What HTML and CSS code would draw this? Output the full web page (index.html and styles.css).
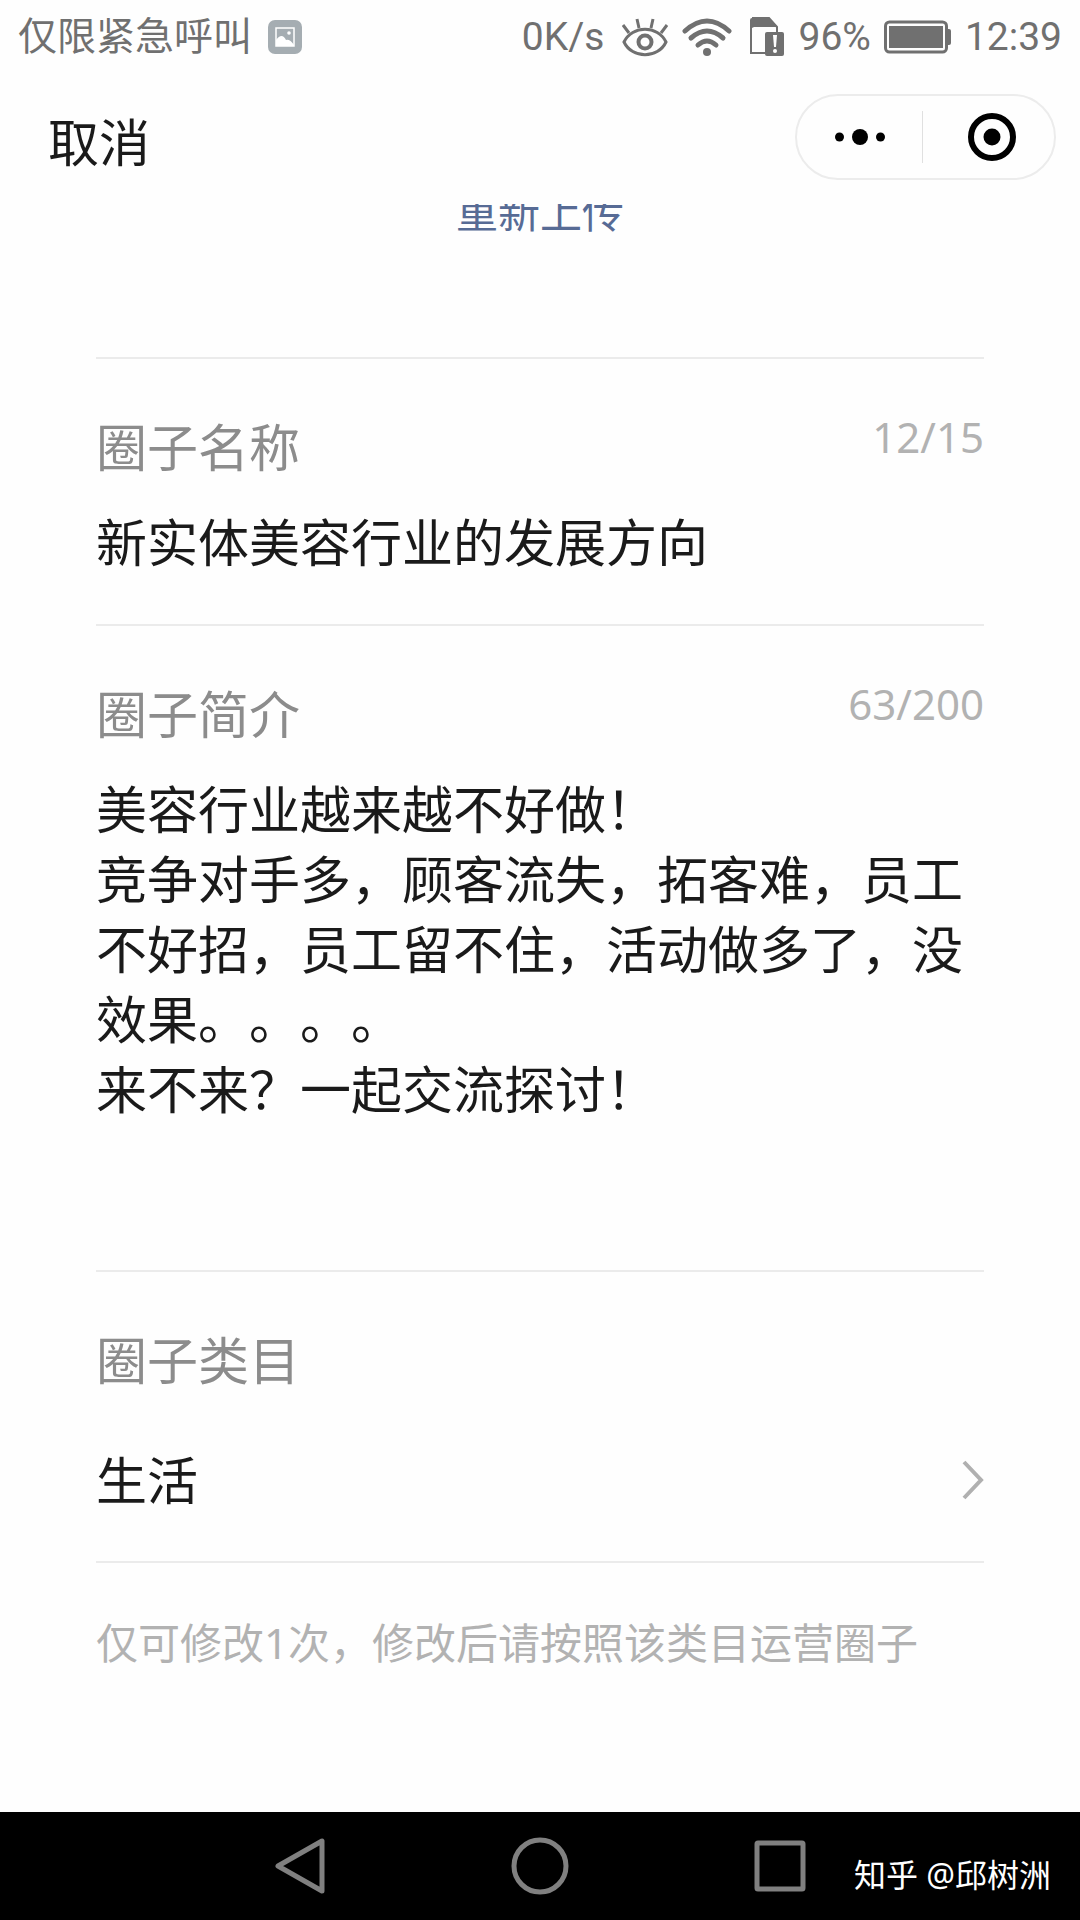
FILE: index.html
```html
<!DOCTYPE html>
<html lang="zh-CN">
<head>
  <meta charset="UTF-8" />
  <meta name="viewport" content="width=device-width, initial-scale=1" />
  <title>圈子资料</title>
  <link rel="stylesheet" href="styles.css">
</head>
<body>
  <div class="status-bar">
    <div class="status-left">
      <span>仅限紧急呼叫</span>
      <svg width="34" height="34" viewBox="0 0 34 34">
        <rect width="34" height="34" rx="7" fill="#a5adb2" />
        <rect x="8" y="8" width="18" height="18" fill="none" stroke="#fff" stroke-width="1.5" />
        <path d="M8 20 Q14 12 18 20 Q22 19 26 25 V26 H8Z" fill="#fff" />
        <circle cx="21" cy="13" r="1.8" fill="#fff" />
      </svg>
    </div>
    <div class="status-right">
      <span>0K/s</span>
      <svg class="icon-eye" width="48" height="40" viewBox="0 0 48 40" fill="none" stroke="#707070" stroke-width="3">
        <path d="M3 25 C11 8 37 8 45 25 C37 42 11 42 3 25Z" />
        <circle cx="24" cy="25" r="6.5" stroke-width="4" />
        <path d="M8 16 L2 8 M18 11 L16 2 M30 11 L32 2 M40 16 L46 8" />
      </svg>
      <svg class="icon-wifi" width="50" height="40" viewBox="0 0 50 40" fill="none" stroke="#707070" stroke-width="5" stroke-linecap="round">
        <path d="M3 14 Q25 -6 47 14" />
        <path d="M9 21 Q25 7 41 21" />
        <path d="M16 28 Q25 20 34 28" />
        <circle cx="25" cy="35" r="4" fill="#707070" stroke="none" />
      </svg>
      <svg width="36" height="40" viewBox="0 0 36 40">
        <path d="M3 1 H20 L28 10 V18 M16 36 H2 V3" fill="none" stroke="#707070" stroke-width="2" />
        <path d="M1 3 Q1 1 3 1 H20 L28 10 H5 L1 12Z" fill="#707070" />
        <rect x="16" y="15" width="19" height="24" rx="2" fill="#707070" />
        <path d="M24 18 H28 L27 30 H25Z" fill="#fff" />
        <circle cx="26" cy="34" r="2" fill="#fff" />
      </svg>
      <span>96%</span>
      <svg width="68" height="34" viewBox="0 0 68 34">
        <rect x="1.5" y="2" width="61" height="30" rx="4" fill="none" stroke="#707070" stroke-width="3" />
        <rect x="5" y="6" width="54" height="22" fill="#707070" />
        <path d="M63 9 H65 Q67 9 67 11 V23 Q67 25 65 25 H63Z" fill="#707070" />
      </svg>
      <span>12:39</span>
    </div>
  </div>

  <header class="navbar">
    <button type="button" class="btn-cancel">取消</button>
    <div class="capsule">
      <button type="button" aria-label="更多">
        <svg width="52" height="52" viewBox="0 0 52 52">
          <circle cx="5.5" cy="26" r="4.5" />
          <circle cx="26" cy="26" r="8" />
          <circle cx="46.5" cy="26" r="4.5" />
        </svg>
      </button>
      <button type="button" class="btn-close" aria-label="关闭">
        <svg width="52" height="52" viewBox="0 0 52 52">
          <circle cx="26" cy="26" r="21" fill="none" stroke="#000" stroke-width="6" />
          <circle cx="26" cy="26" r="8.5" />
        </svg>
      </button>
    </div>
  </header>

  <main class="content">
    <a href="#" class="reupload">重新上传</a>

    <form class="form">
      <div class="field">
        <div class="field-head">
          <label for="name">圈子名称</label>
          <span class="count">12/15</span>
        </div>
        <input type="text" id="name" maxlength="15" value="新实体美容行业的发展方向">
      </div>

      <div class="field field-intro">
        <div class="field-head">
          <label for="intro">圈子简介</label>
          <span class="count">63/200</span>
        </div>
        <textarea id="intro" rows="6" maxlength="200">美容行业越来越不好做！
竞争对手多，顾客流失，拓客难，员工不好招，员工留不住，活动做多了，没效果。。。。
来不来？一起交流探讨！</textarea>
      </div>

      <div class="field field-category">
        <div class="field-head">
          <label for="category">圈子类目</label>
        </div>
        <div class="picker">
          <select id="category">
            <option>生活</option>
          </select>
          <svg width="22" height="40" viewBox="0 0 22 40">
            <path d="M2 2 L19 20 L2 38" fill="none" stroke="#b0b0b0" stroke-width="4" />
          </svg>
        </div>
      </div>

      <p class="hint">仅可修改1次，修改后请按照该类目运营圈子</p>
    </form>
  </main>

  <nav class="system-nav">
    <button type="button" aria-label="返回">
      <svg width="60" height="60" viewBox="0 0 60 60">
        <path d="M52 5 V55 L8 30Z" />
      </svg>
    </button>
    <button type="button" aria-label="主页">
      <svg width="60" height="60" viewBox="0 0 60 60">
        <circle cx="30" cy="30" r="26" />
      </svg>
    </button>
    <button type="button" aria-label="最近任务">
      <svg width="60" height="60" viewBox="0 0 60 60">
        <rect x="7" y="7" width="46" height="46" rx="1" />
      </svg>
    </button>
    <span class="watermark">知乎 @邱树洲</span>
  </nav>
</body>
</html>
```
FILE: styles.css
```css
* {
  box-sizing: border-box;
}

body {
  margin: 0;
  min-height: 100vh;
  display: flex;
  flex-direction: column;
  background: #fefefe;
  color: #1a1a1a;
  font-family: "Noto Sans", "Noto Sans CJK SC", sans-serif;
  text-spacing-trim: space-all;
}

button, input, textarea, select {
  margin: 0;
  padding: 0;
  border: none;
  outline: none;
  background: none;
  color: inherit;
  font: inherit;
}

svg {
  display: block;
  flex: none;
}

/* status bar */
.status-bar {
  display: flex;
  justify-content: space-between;
  align-items: center;
  height: 74px;
  padding: 0 18px;
  color: #707070;
  font-family: Roboto, "Noto Sans CJK SC", sans-serif;
  font-size: 39px;
  line-height: 74px;
}

.status-left, .status-right {
  display: flex;
  align-items: center;
}

.status-left {
  gap: 16px;
}

.status-right {
  gap: 13px;
}

.icon-eye {
  margin-left: 4px;
}

.icon-wifi {
  margin-right: 4px;
}

/* top bar */
.navbar {
  display: flex;
  justify-content: space-between;
  align-items: center;
  height: 130px;
  padding: 0 24px 4px 48px;
}

.btn-cancel {
  padding-top: 10px;
  font-size: 51px;
  line-height: 70px;
}

.capsule {
  display: flex;
  align-items: center;
  width: 261px;
  height: 86px;
  border: 2px solid #ececec;
  border-radius: 43px;
}

.capsule button {
  flex: 1;
  display: flex;
  justify-content: center;
}

.capsule .btn-close {
  padding-left: 6px;
  border-left: 1px solid #e0e0e0;
}

/* form */
.content {
  flex: 1;
  overflow: hidden;
  padding: 0 96px;
}

.reupload {
  display: block;
  margin: -22px 0 115px;
  color: #576b95;
  font-size: 42px;
  line-height: 60px;
  text-align: center;
  text-decoration: none;
}

.field {
  display: flex;
  flex-direction: column;
  gap: 25px;
  padding: 53px 0 47px;
  border-top: 2px solid #ebebeb;
  font-size: 51px;
  line-height: 70px;
}

.field-head {
  display: flex;
  justify-content: space-between;
  color: #8c8c8c;
}

.count {
  color: #b2b2b2;
  font-size: 42px;
  line-height: 50px;
}

.field input {
  width: 100%;
  height: 70px;
}

.field textarea {
  display: block;
  width: 100%;
  line-height: 70px;
  resize: none;
  overflow: hidden;
}

.field-intro {
  padding-bottom: 76px;
}

.field-category {
  gap: 50px;
  padding-bottom: 46px;
  border-bottom: 2px solid #ebebeb;
}

.picker {
  display: flex;
  align-items: center;
}

.picker select {
  flex: 1;
  height: 70px;
  appearance: none;
}

.hint {
  margin: 50px 0;
  color: #b2b2b2;
  font-size: 42px;
  line-height: 60px;
}

/* system navigation */
.system-nav {
  position: relative;
  display: flex;
  justify-content: center;
  align-items: center;
  gap: 180px;
  height: 108px;
  background: #000;
}

.system-nav svg {
  fill: none;
  stroke: #808080;
  stroke-width: 5;
  stroke-linejoin: round;
}

.watermark {
  position: absolute;
  right: 29px;
  bottom: 21px;
  color: #fff;
  font-size: 32px;
  line-height: 48px;
}
```
